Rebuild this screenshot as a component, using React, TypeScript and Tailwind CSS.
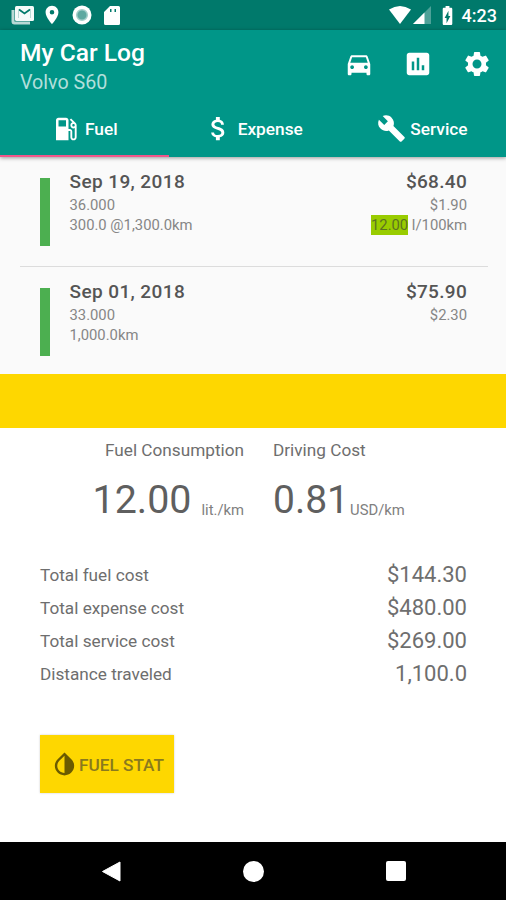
import type { ReactNode } from "react";
import {
  MdAssessment,
  MdAttachMoney,
  MdBatteryChargingFull,
  MdBuild,
  MdDirectionsCar,
  MdInvertColors,
  MdPlace,
  MdSettings,
} from "react-icons/md";

interface LogEntry {
  date: string;
  total: string;
  volume: string;
  price: string;
  distance: string;
  consumption?: string;
}

const entries: LogEntry[] = [
  {
    date: "Sep 19, 2018",
    total: "$68.40",
    volume: "36.000",
    price: "$1.90",
    distance: "300.0 @1,300.0km",
    consumption: "12.00",
  },
  {
    date: "Sep 01, 2018",
    total: "$75.90",
    volume: "33.000",
    price: "$2.30",
    distance: "1,000.0km",
  },
];

const totals = [
  { label: "Total fuel cost", value: "$144.30" },
  { label: "Total expense cost", value: "$480.00" },
  { label: "Total service cost", value: "$269.00" },
  { label: "Distance traveled", value: "1,100.0" },
];

function StatusBar() {
  return (
    <div className="flex h-[30px] items-center justify-between bg-[#00796b] pr-[9px] pl-[11px] text-white">
      <div className="flex items-center">
        <svg width="24" height="20" viewBox="0 0 24 20">
          <path d="M2 5v11.500q0 1.500 1.500 1.500H19" fill="none" stroke="#b9d9d5" strokeWidth="3" />
          <rect x="4" y="1" width="19" height="15" rx="1.500" fill="#f4faf9" />
          <path d="M8 4.500l5.500 4 5.500-4" fill="none" stroke="#00796b" strokeWidth="1.800" />
          <path d="M7.500 4v9M19.500 4v9" stroke="#b9d9d5" />
        </svg>
        <MdPlace className="ml-[6px] size-[22px]" />
        <svg className="ml-[9px]" width="20" height="20" viewBox="0 0 20 20">
          <circle cx="10" cy="10" r="9.500" fill="#fff" />
          <circle cx="10" cy="10" r="5.300" fill="#5fa9a1" stroke="#a5cfca" strokeWidth="1.500" />
        </svg>
        <svg className="ml-[12px]" width="16" height="19" viewBox="0 0 16 19">
          <path
            d="M6 0h8.500Q16 0 16 1.500v16q0 1.500-1.500 1.500h-13Q0 19 0 17.500V6zM6 3v3h1.500V3zM10.500 3v3h1.500V3z"
            fill="#fff"
            fillRule="evenodd"
          />
        </svg>
      </div>
      <div className="flex items-center">
        <svg width="22" height="18" viewBox="0 0 22 18">
          <path d="M0 3.500Q11-3.500 22 3.500L11 18z" fill="#fff" />
        </svg>
        <svg className="ml-[2px]" width="18" height="18" viewBox="0 0 18 18">
          <path d="M18 0v18H0z" fill="#4da198" />
          <path d="M11.500 6.500V18H0z" fill="#fff" />
        </svg>
        <MdBatteryChargingFull className="ml-[5px] size-[23px]" />
        <span className="ml-[3px] pt-px text-[18px] leading-none font-medium">4:23</span>
      </div>
    </div>
  );
}

function PumpIcon() {
  return (
    <svg className="size-[30px]" viewBox="0 0 24 24" fill="currentColor">
      <path d="M19.770 7.230l.01-.01-3.720-3.720L15 4.560l2.110 2.110c-.94.36-1.610 1.260-1.610 2.330 0 1.380 1.120 2.500 2.500 2.500.36 0 .69-.08 1-.21v7.210c0 .55-.45 1-1 1s-1-.45-1-1V14c0-1.100-.9-2-2-2h-1V5c0-1.100-.9-2-2-2H6c-1.100 0-2 .9-2 2v16h10v-7.500h1.500v5c0 1.380 1.120 2.500 2.500 2.500s2.500-1.120 2.500-2.500V9c0-.69-.28-1.320-.73-1.770zM12 10H6V5h6v5zm6 0c-.55 0-1-.45-1-1s.45-1 1-1 1 .45 1 1-.45 1-1 1z" />
    </svg>
  );
}

function Tab({ icon, label, className }: { icon: ReactNode; label: string; className: string }) {
  return (
    <div className={`flex items-center text-[17.3px] font-medium ${className}`}>
      {icon}
      <span className="pt-[2px]">{label}</span>
    </div>
  );
}

function Header() {
  return (
    <header className="relative h-[127px] bg-[#009688] text-white shadow-[0_1px_4px_rgba(0,0,0,0.4)]">
      <div className="flex h-[72px] justify-between pr-[14px] pl-[20px]">
        <div className="pt-[7px]">
          <h1 className="text-[24.6px] leading-[32px] font-medium">My Car Log</h1>
          <p className="pt-px text-[19.7px] leading-[26px] text-[#b2dfdb]">Volvo S60</p>
        </div>
        <div className="flex gap-[29px] pt-[19px]">
          <MdDirectionsCar className="size-[30px]" />
          <MdAssessment className="size-[30px]" />
          <MdSettings className="size-[30px]" />
        </div>
      </div>
      <div className="grid h-[53px] grid-cols-3">
        <Tab icon={<PumpIcon />} label="Fuel" className="gap-[4px] pl-[51px]" />
        <Tab icon={<MdAttachMoney className="size-[31px]" />} label="Expense" className="gap-[4px] pl-[34px]" />
        <Tab icon={<MdBuild className="size-[29px]" />} label="Service" className="gap-[4px] pl-[40px]" />
      </div>
      <div className="absolute bottom-0 left-0 h-[2px] w-[169px] bg-[#f0568a]" />
    </header>
  );
}

function EntryRow({ entry }: { entry: LogEntry }) {
  return (
    <div className="mx-[20px] flex h-[109px] pt-[12px] pr-[19px] pl-[20px] text-[14.8px] leading-[20px] text-[#868686]">
      <div className="mt-[9px] h-[68px] w-[10px] bg-[#4caf50]" />
      <div className="ml-[19.500px] flex-1">
        <div className="text-[19px] leading-[26px] font-medium tracking-[0.4px] text-[#555]">{entry.date}</div>
        <div>{entry.volume}</div>
        <div>{entry.distance}</div>
      </div>
      <div className="text-right">
        <div className="text-[19px] leading-[26px] font-medium tracking-[0.3px] text-[#555]">{entry.total}</div>
        <div>{entry.price}</div>
        {entry.consumption && (
          <div>
            <span className="bg-[#99cc00] py-px text-[#5d7320]">{entry.consumption}</span> l/100km
          </div>
        )}
      </div>
    </div>
  );
}

function Summary() {
  return (
    <section className="flex-1 bg-white text-[#6e6e6e]">
      <div className="grid grid-cols-[244px_1fr] gap-x-[29px] pt-[10px] text-[17.2px] leading-[24px]">
        <div className="text-right">Fuel Consumption</div>
        <div>Driving Cost</div>
        <div className="mt-[13px] flex items-baseline justify-end gap-[10px] leading-[50px]">
          <span className="text-[39.4px] text-[#5f5f5f]">12.00</span>
          <span className="translate-y-[2px] text-[14.8px] text-[#808080]">lit./km</span>
        </div>
        <div className="mt-[13px] flex items-baseline gap-px leading-[50px]">
          <span className="text-[39px] text-[#5f5f5f]">0.81</span>
          <span className="translate-y-[2px] text-[14.8px] text-[#808080]">USD/km</span>
        </div>
      </div>
      <dl className="mt-[25px] pr-[39px] pl-[40px]">
        {totals.map((row) => (
          <div key={row.label} className="flex h-[33px] items-center justify-between">
            <dt className="pt-[3px] text-[17.2px]">{row.label}</dt>
            <dd className="text-[22px]">{row.value}</dd>
          </div>
        ))}
      </dl>
      <button className="mt-[45px] ml-[40px] flex h-[58px] w-[134px] items-center bg-[#fed700] pl-[10px] text-[17.2px] font-medium text-[#8a7a1e] shadow-[0_0_2px_rgba(0,0,0,0.2)]">
        <MdInvertColors className="size-[29px] text-[#6b5b00]" />
        <span className="pt-[3px]">FUEL STAT</span>
      </button>
    </section>
  );
}

function NavBar() {
  return (
    <nav className="flex h-[58px] items-center justify-between bg-black pr-[100px] pl-[101px]">
      <svg width="20" height="21" viewBox="0 0 20 21">
        <path d="M19 1v19L1.500 10.500z" fill="#fff" stroke="#fff" strokeLinejoin="round" />
      </svg>
      <div className="size-[21px] rounded-full bg-white" />
      <div className="size-[20px] rounded-[2px] bg-white" />
    </nav>
  );
}

export default function App() {
  return (
    <div className="flex h-[900px] w-[506px] flex-col overflow-hidden bg-[#fafafa] font-['Roboto',sans-serif]">
      <StatusBar />
      <Header />
      <main className="h-[217px]">
        <EntryRow entry={entries[0]} />
        <div className="mr-[18px] ml-[20px] h-px bg-[#dcdcdc]" />
        <EntryRow entry={entries[1]} />
      </main>
      <div className="h-[54px] bg-[#fed700]" />
      <Summary />
      <NavBar />
    </div>
  );
}
